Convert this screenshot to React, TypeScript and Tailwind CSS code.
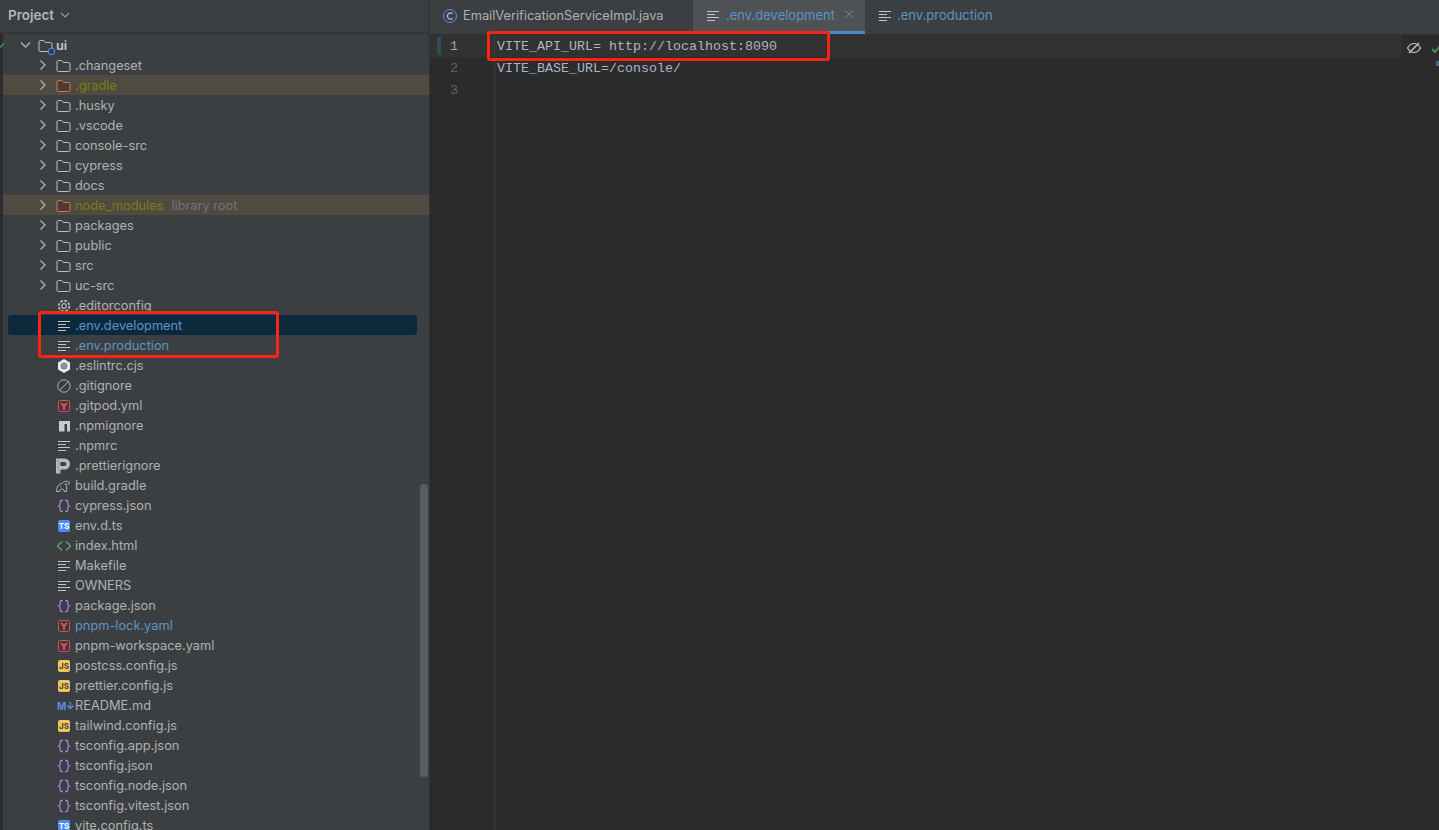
import React from "react";

const S = ({ children, w = 16 }: { children: React.ReactNode; w?: number }) => (
  <svg width={w} height="16" viewBox={`0 0 ${w} 16`} fill="none" className="shrink-0">{children}</svg>
);

const Chevron = () => (
  <svg width="16" height="16" viewBox="0 0 16 16" fill="none"><path d="M5.500 3.500 10 8l-4.500 4.500" stroke="#afb1b3" strokeWidth="1.300" /></svg>
);
const Folder = ({ orange }: { orange?: boolean }) => (
  <S><path d="M2 4a1.500 1.500 0 0 1 1.500-1.500h3.200l1.800 2h5A1.500 1.500 0 0 1 15 6v6a1.500 1.500 0 0 1-1.500 1.500h-10A1.500 1.500 0 0 1 2 12Z" stroke={orange ? "#c77d55" : "#bcc0c6"} fill={orange ? "#4f3a30" : "none"} /></S>
);
const Lines = () => (
  <S><path d="M3 3.500h12M3 6.500h8M3 9.500h12M3 12.500h8" stroke="#c4c7ca" strokeWidth="1" /></S>
);
const Gear = () => (
  <S><circle cx="9" cy="8" r="2.300" stroke="#b8bbbf" strokeWidth="1.200" /><circle cx="9" cy="8" r="5.300" stroke="#b8bbbf" strokeWidth="1.800" strokeDasharray="2.800 1.300" /></S>
);
const Eslint = () => (
  <S><path d="M9 1 15 4.500v7L9 15l-6-3.500v-7Z" fill="#ececec" /><circle cx="9" cy="8" r="3.600" fill="#8d8d9c" /></S>
);
const Ignore = () => (
  <S><circle cx="9" cy="8" r="6.200" stroke="#b0b3b7" /><path d="m4.800 12.200 8.400-8.400" stroke="#b0b3b7" /></S>
);
const Yaml = () => (
  <S><rect x="3.500" y="2.500" width="11" height="11" rx="1" stroke="#c75450" fill="#4a3436" /><path d="M6.300 5 9 8.300 11.700 5M9 8.300V12" stroke="#e0686a" strokeWidth="1.500" /></S>
);
const Npm = () => (
  <S><path d="M4 3h11v10.500h-3V6h-2.500v7.500H4Z" fill="#c8cacd" /></S>
);
const Prettier = () => (
  <S><path d="M1 .5h8.500a5.500 5.500 0 0 1 0 11H5.500v4H1Z" fill="#b8babd" /><path d="M5.500 4h3.800a2 2 0 0 1 0 4H5.500Z" fill="#3c3f41" /><path d="M2 3h1.500M3 6h1.500M2 9h1.500M3 12h1" stroke="#6b6d70" /></S>
);
const Gradle = () => (
  <S><path d="M1.500 13.500c0-4.500 2-7.500 5.500-8.300 2.200-2 5.300-2.700 7-1.200 1.200 1.100-.3 3-1.500 2.300-.9-.5-1.800-.6-2.500-.1 1.700 1.300 2.200 3.800 1.500 7.300H9c.3-1.700-.8-2.500-2.300-2.500S4.800 11.800 5 13.500Z" stroke="#b0b3b7" /><path d="M5 8.500h1" stroke="#b0b3b7" /></S>
);
const Json = () => (
  <S><path d="M8 2.500H6.500C5 2.500 5.300 4 5.300 5.500S4.500 7.600 3.500 8c1 .4 1.800 1 1.800 2.500s-.3 3 1.200 3H8M10 2.500h1.500c1.500 0 1.200 1.500 1.200 3s.8 2.100 1.800 2.500c-1 .4-1.800 1-1.800 2.500s.3 3-1.200 3H10" stroke="#a67fe0" strokeWidth="1.300" /></S>
);
const Badge = ({ t, bg, c }: { t: string; bg: string; c: string }) => (
  <span className={`w-[12px] h-[12px] ml-[3px] mr-[1px] rounded-[2px] flex items-center justify-center text-[8px] font-bold leading-none shrink-0 ${bg} ${c}`}>{t}</span>
);
const Ts = () => <Badge t="TS" bg="bg-[#4c8cf5]" c="text-white" />;
const Js = () => <Badge t="JS" bg="bg-[#f2c55c]" c="text-[#3c3f41]" />;
const Html = () => (
  <S><path d="M7 3.500 2.500 8 7 12.500M11 3.500 15.500 8 11 12.500" stroke="#59a869" strokeWidth="1.300" /></S>
);
const Md = () => (
  <span className="w-[16px] pl-[2px] text-[#5c8fe6] font-bold text-[10px] leading-none tracking-[-0.5px] whitespace-nowrap shrink-0">M↓</span>
);

type Row = { n: string; i: React.ReactNode; c?: string; arrow?: boolean; bg?: string; extra?: string };
const plain = "text-[#afb1b3]";
const blue = "text-[#5c94c5]";
const olive = "text-[#7d7d12]";

const rows: Row[] = [
  { n: ".changeset", i: <Folder />, arrow: true },
  { n: ".gradle", i: <Folder orange />, arrow: true, c: olive, bg: "bg-[#4f4b41]" },
  { n: ".husky", i: <Folder />, arrow: true },
  { n: ".vscode", i: <Folder />, arrow: true },
  { n: "console-src", i: <Folder />, arrow: true },
  { n: "cypress", i: <Folder />, arrow: true },
  { n: "docs", i: <Folder />, arrow: true },
  { n: "node_modules", i: <Folder orange />, arrow: true, c: olive, bg: "bg-[#4f4b41]", extra: "library root" },
  { n: "packages", i: <Folder />, arrow: true },
  { n: "public", i: <Folder />, arrow: true },
  { n: "src", i: <Folder />, arrow: true },
  { n: "uc-src", i: <Folder />, arrow: true },
  { n: ".editorconfig", i: <Gear /> },
  { n: ".env.development", i: <Lines />, c: blue, bg: "selected" },
  { n: ".env.production", i: <Lines />, c: blue },
  { n: ".eslintrc.cjs", i: <Eslint /> },
  { n: ".gitignore", i: <Ignore /> },
  { n: ".gitpod.yml", i: <Yaml /> },
  { n: ".npmignore", i: <Npm /> },
  { n: ".npmrc", i: <Lines /> },
  { n: ".prettierignore", i: <Prettier /> },
  { n: "build.gradle", i: <Gradle /> },
  { n: "cypress.json", i: <Json /> },
  { n: "env.d.ts", i: <Ts /> },
  { n: "index.html", i: <Html /> },
  { n: "Makefile", i: <Lines /> },
  { n: "OWNERS", i: <Lines /> },
  { n: "package.json", i: <Json /> },
  { n: "pnpm-lock.yaml", i: <Yaml />, c: blue },
  { n: "pnpm-workspace.yaml", i: <Yaml /> },
  { n: "postcss.config.js", i: <Js /> },
  { n: "prettier.config.js", i: <Js /> },
  { n: "README.md", i: <Md /> },
  { n: "tailwind.config.js", i: <Js /> },
  { n: "tsconfig.app.json", i: <Json /> },
  { n: "tsconfig.json", i: <Json /> },
  { n: "tsconfig.node.json", i: <Json /> },
  { n: "tsconfig.vitest.json", i: <Json /> },
  { n: "vite.config.ts", i: <Ts /> },
];

const font = { fontFamily: "Inter, 'Liberation Sans', sans-serif" };

export default function App() {
  return (
    <div className="relative w-[1439px] h-[830px] overflow-hidden flex bg-[#2b2b2b] text-[12.8px]" style={font}>
      {/* Project panel */}
      <div className="w-[430px] h-full shrink-0 flex flex-col bg-[#3c3f41] border-r border-[#323232]">
        <div className="h-[34px] shrink-0 flex items-center pl-[8px] pb-[2px] border-b-2 border-[#333537] bg-[#3b3e40]">
          <span className="font-semibold text-[13.5px] text-[#b3b6b9]">Project</span>
          <svg width="12" height="12" viewBox="0 0 12 12" fill="none" className="ml-[5px]"><path d="m2 4 4 4 4-4" stroke="#9a9da0" strokeWidth="1.100" /></svg>
        </div>
        <div className="flex-1 min-h-0 overflow-hidden border-l-[3px] border-[#2b2d2f] pt-px">
          <div className="h-[20px] box-border pt-[2px] flex items-center text-[#c4c7ca] font-semibold">
            <span className="w-[15px] shrink-0" />
            <svg width="16" height="16" viewBox="0 0 16 16" fill="none" className="mb-[2px]"><path d="m3 5.500 4.500 4.500L12 5.500" stroke="#afb1b3" strokeWidth="1.300" /></svg>
            <span className="w-[3px] shrink-0" />
            <span className="relative w-[16px] h-[16px] shrink-0">
              <Folder />
              <span className="absolute right-[-2px] bottom-[-1px] w-[7px] h-[7px] rounded-[2px] border border-[#4c8cf5] bg-[#3c3f41]" />
            </span>
            <span className="ml-[3px]">ui</span>
          </div>
          {rows.map((r) => (
            <div key={r.n} className={`relative h-[20px] box-border pt-[2px] flex items-center whitespace-nowrap ${r.bg && r.bg !== "selected" ? r.bg : ""}`}>
              {r.bg === "selected" && (
                <span className="absolute left-[5px] right-[12px] top-0 bottom-0 rounded-[3px] bg-[#0d293e]" />
              )}
              <span className="relative w-[52px] pl-[32px] mb-[2px] shrink-0 flex justify-start">{r.arrow && <Chevron />}</span>
              <span className="relative flex items-center">{r.i}</span>
              <span className={`relative ml-[4px] ${r.c ?? plain}`}>{r.n}</span>
              {r.extra && <span className="relative ml-[8px] text-[#757575]">{r.extra}</span>}
            </div>
          ))}
        </div>
      </div>

      {/* Editor */}
      <div className="flex-1 min-w-0 flex flex-col">
        <div className="h-[35px] shrink-0 flex items-stretch bg-[#3c3f41] border-b border-[#323232] text-[#afb1b3]">
          <div className="w-[263px] flex items-center pl-[12px] pb-[2px] gap-[5px]">
            <svg width="16" height="16" viewBox="0 0 16 16" fill="none"><circle cx="8" cy="8" r="6.500" stroke="#4c8cf5" /><path d="M10.500 5.800A3 3 0 1 0 10.500 10.200" stroke="#b7bdc6" strokeWidth="1.200" /></svg>
            <span>EmailVerificationServiceImpl.java</span>
          </div>
          <div className="w-[172px] flex items-center pl-[12px] gap-[5px] bg-[#4e5254] border-b-[3px] border-[#4a88c7] relative">
            <span className="-ml-[1px] mr-[1px]"><Lines /></span>
            <span className="text-[13px] text-[#5c94c5]">.env.development</span>
            <svg width="10" height="10" viewBox="0 0 10 10" fill="none" className="absolute left-[151px] top-[9px]"><path d="m1.500 1.500 7 7m0-7-7 7" stroke="#7f8285" /></svg>
          </div>
          <div className="flex items-center pl-[12px] pb-[2px] gap-[5px]">
            <span className="-ml-[1px]"><Lines /></span>
            <span className="text-[13px] text-[#5c94c5]">.env.production</span>
          </div>
        </div>
        <div className="relative flex-1 flex min-h-0 text-[13.33px]" style={{ fontFamily: "'Liberation Mono', monospace" }}>
          <div className="w-[65px] shrink-0 border-r border-[#3a3a3a] text-[#606366] relative">
            <div className="absolute left-[7px] top-[2px] w-[4px] h-[18px] bg-[#2f4a5b]" />
            <div className="h-[22px] leading-[24px] pl-[20px] text-[#a4a3a3] bg-[#323232]">1</div>
            <div className="h-[22px] leading-[24px] pl-[20px]">2</div>
            <div className="h-[22px] leading-[24px] pl-[20px]">3</div>
          </div>
          <div className="flex-1 min-w-0 text-[#a9b7c6]">
            <div className="h-[22px] leading-[24px] pl-[2px] bg-[#323232] w-[907px] whitespace-pre">VITE_API_URL= http://localhost:8090</div>
            <div className="h-[22px] leading-[24px] pl-[2px] whitespace-pre">VITE_BASE_URL=/console/</div>
          </div>
        </div>
      </div>

      {/* Overlays */}
      <div className="absolute left-[420px] top-[484px] w-[8px] h-[293px] bg-[#5b5e60] rounded-[4px]" />
      <div className="absolute left-[38px] top-[311px] w-[241px] h-[47px] border-[3px] border-[#fa2416] rounded-[3px]" />
      <div className="absolute left-[487px] top-[31px] w-[343px] h-[30px] border-[3px] border-[#fa2416] rounded-[3px]" />
      <svg width="16" height="16" viewBox="0 0 16 16" fill="none" className="absolute left-[1406px] top-[40px]">
        <path d="M1.500 8c2-3.500 4-4.500 6.500-4.500S12.500 4.500 14.500 8c-2 3.500-4 4.500-6.500 4.500S3.500 11.500 1.500 8Z" stroke="#c4c7ca" strokeWidth="1.200" />
        <path d="m3 13 10-10" stroke="#c4c7ca" strokeWidth="1.500" />
      </svg>
      <svg width="10" height="10" viewBox="0 0 10 10" fill="none" className="absolute left-[1431px] top-[44px]">
        <path d="m1 5 3 3 5-6" stroke="#499c54" strokeWidth="1.800" />
      </svg>
      <div className="absolute left-[1436px] top-[61px] w-[3px] h-[5px] bg-[#3e6d9c]" />
      <svg width="6" height="8" viewBox="0 0 6 8" fill="none" className="absolute left-0 top-[41px]"><path d="m-1 4 2 2 3-4" stroke="#499c54" strokeWidth="1.200" /></svg>
    </div>
  );
}
